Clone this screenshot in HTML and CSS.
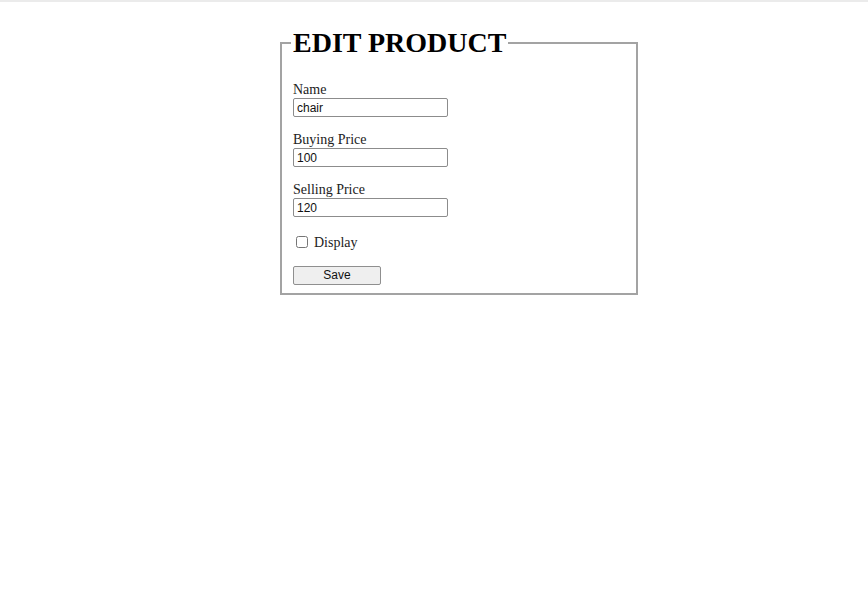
FILE: index.html
```html
<!DOCTYPE html>
<html>
<head>
<meta charset="utf-8">
<link rel="stylesheet" href="styles.css">
</head>
<body>
<div class="topbar"></div>
<main class="page">
  <form class="product-form">
    <fieldset class="box">
      <legend class="title">EDIT PRODUCT</legend>
      <div class="field">
        <label class="label">Name</label>
        <input class="input" type="text" value="chair">
      </div>
      <div class="field">
        <label class="label">Buying Price</label>
        <input class="input" type="text" value="100">
      </div>
      <div class="field">
        <label class="label">Selling Price</label>
        <input class="input" type="text" value="120">
      </div>
      <div class="check-row">
        <input class="check" type="checkbox">
        <span class="label check-label">Display</span>
      </div>
      <div class="actions">
        <button class="btn" type="button">Save</button>
      </div>
    </fieldset>
  </form>
</main>
</body>
</html>
```
FILE: styles.css
```css
html, body {
  margin: 0;
  padding: 0;
  background: #ffffff;
  font-family: "Liberation Serif", "Times New Roman", serif;
  color: #111;
}
.topbar {
  height: 2px;
  background: #ebebeb;
}
.page {
  padding-top: 26px;
  padding-left: 280px;
}
.product-form {
  width: 358px;
}
.box {
  margin: 0;
  border: 2px solid #a3a3a3;
  padding: 0 10px 8px 11px;
  min-width: 0;
}
.title {
  font-size: 28px;
  font-weight: bold;
  padding: 0 2px;
  margin-left: -2px;
  line-height: 30px;
  color: #000;
}
.field {
  display: flex;
  flex-direction: column;
  align-items: flex-start;
}
.field:first-of-type {
  margin-top: 23px;
}
.field + .field {
  margin-top: 14px;
}
.label {
  font-size: 14px;
  line-height: 16px;
  padding-top: 1px;
  color: #222;
}
.input {
  box-sizing: border-box;
  width: 155px;
  height: 19px;
  margin: 0;
  padding: 1px 3px;
  border: 1px solid #8c8c8c;
  border-radius: 2px;
  font-family: "Liberation Sans", Arial, sans-serif;
  font-size: 12px;
  color: #111;
}
.check-row {
  display: flex;
  align-items: center;
  gap: 6px;
  margin-top: 16px;
  padding-left: 3px;
}
.check {
  width: 12px;
  height: 12px;
  margin: 0;
}
.check-label {
  line-height: 14px;
  padding-top: 3px;
}
.actions {
  margin-top: 15px;
}
.btn {
  box-sizing: border-box;
  width: 88px;
  height: 19px;
  padding: 0;
  border: 1px solid #8f8f8f;
  border-radius: 2px;
  background: #efefef;
  font-family: "Liberation Sans", Arial, sans-serif;
  font-size: 12px;
  color: #111;
}
```
